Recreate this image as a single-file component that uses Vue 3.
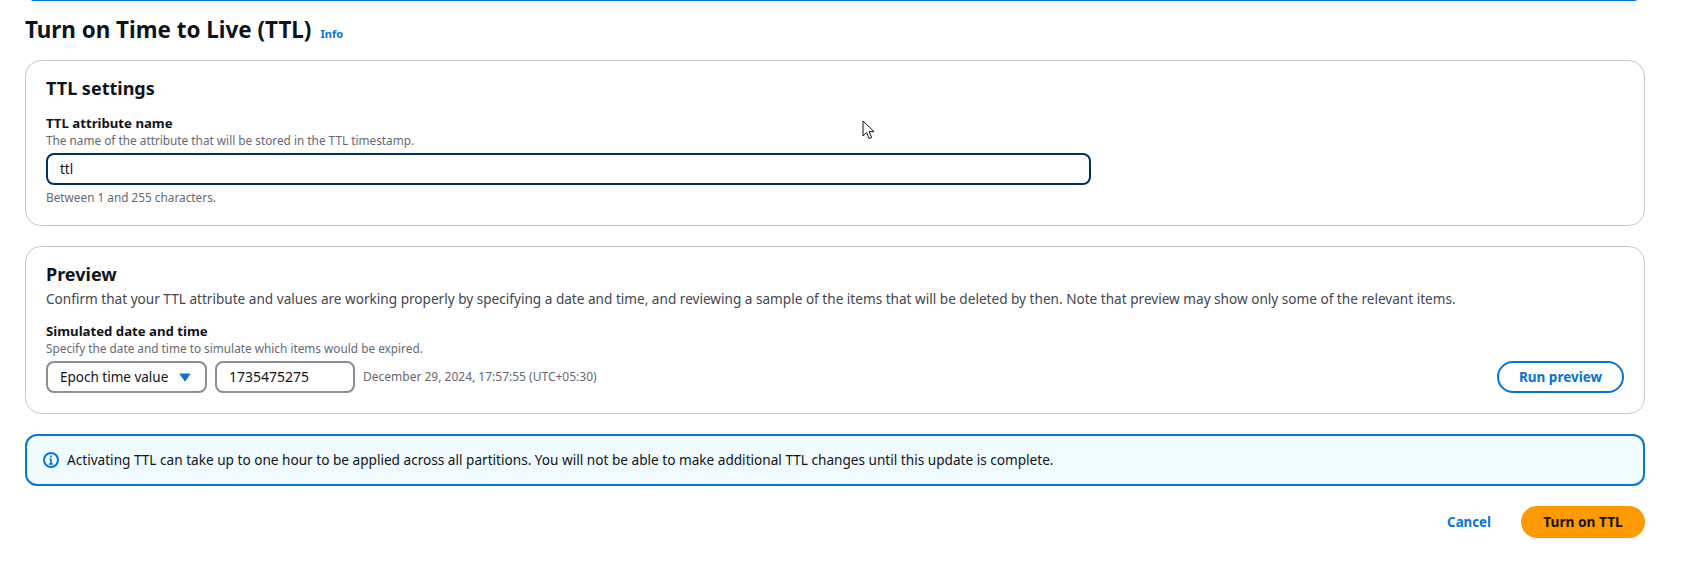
<template>
  <div class="page">
    <div class="top-edge"></div>
    <div class="title-row">
      <h1>Turn on Time to Live (TTL)</h1>
      <a class="info">Info</a>
    </div>

    <section class="card settings">
      <h2>TTL settings</h2>
      <div class="label">TTL attribute name</div>
      <div class="hint">The name of the attribute that will be stored in the TTL timestamp.</div>
      <input class="name-input" type="text" value="ttl" />
      <div class="hint below">Between 1 and 255 characters.</div>
    </section>

    <section class="card preview">
      <h2>Preview</h2>
      <p class="desc">{{ previewText }}</p>
      <div class="label sim">Simulated date and time</div>
      <div class="hint">Specify the date and time to simulate which items would be expired.</div>
      <div class="controls">
        <div class="select">
          <span>Epoch time value</span>
          <svg width="12" height="9" viewBox="0 0 12 9"><path d="M1 1h10L6 8z" fill="#0972d3" stroke="#0972d3" stroke-linejoin="round" /></svg>
        </div>
        <div class="epoch">1735475275</div>
        <span class="date">December 29, 2024, 17:57:55 (UTC+05:30)</span>
        <button class="btn outline">Run preview</button>
      </div>
    </section>

    <div class="alert">
      <svg width="16" height="16" viewBox="0 0 16 16" fill="none" stroke="#0972d3" stroke-width="2">
        <circle cx="8" cy="8" r="7" />
        <path d="M8 7v5M6 12h4M6.500 7H8" stroke-width="1.6" />
        <path d="M8 3.600v2" stroke-width="1.8" />
      </svg>
      <span>{{ alertText }}</span>
    </div>

    <div class="actions">
      <a class="cancel">Cancel</a>
      <button class="btn primary">Turn on TTL</button>
    </div>

    <svg class="cursor" width="13" height="20" viewBox="0 0 13 20">
      <path d="M1 1v15l3.600-3.400 2.600 6 2.500-1.100-2.600-5.800h5z" fill="#fff" stroke="#111" stroke-width="1" stroke-linejoin="round" />
    </svg>
  </div>
</template>

<script setup>
const previewText = 'Confirm that your TTL attribute and values are working properly by specifying a date and time, and reviewing a sample of the items that will be deleted by then. Note that preview may show only some of the relevant items.'
const alertText = 'Activating TTL can take up to one hour to be applied across all partitions. You will not be able to make additional TTL changes until this update is complete.'
</script>

<style>
html, body {
  margin: 0;
  background: #fff;
}
</style>

<style scoped>
.page {
  position: relative;
  height: 569px;
  box-sizing: border-box;
  padding: 0 42px 0 25px;
  font-family: "Noto Sans", "Open Sans", sans-serif;
  font-size: 14px;
  line-height: 20px;
  color: #0f141a;
  overflow: hidden;
}
.top-edge {
  height: 2px;
  margin: -1px 8px 0 6px;
  background: #0972d3;
  box-shadow: 0 3px 8px rgba(0, 7, 22, 0.2);
  border-radius: 0 0 4px 4px;
}
.title-row {
  display: flex;
  align-items: baseline;
  gap: 9px;
  height: 59px;
  padding-top: 13px;
  box-sizing: border-box;
}
h1 {
  margin: 0;
  font-size: 22.4px;
  line-height: 32px;
  font-weight: 700;
}
.info {
  font-size: 11px;
  font-weight: 700;
  color: #0972d3;
}
.card {
  border: 1px solid #c6c6cd;
  border-radius: 16px;
  padding: 15px 20px 0;
  box-sizing: border-box;
}
.settings {
  height: 166px;
}
.preview {
  position: relative;
  height: 168px;
  margin-top: 20px;
  padding-top: 15px;
}
h2 {
  margin: 0;
  font-size: 18px;
  line-height: 24px;
  font-weight: 700;
}
.label {
  margin-top: 14px;
  font-weight: 700;
  font-size: 13.2px;
  line-height: 18px;
}
.hint {
  font-size: 11.8px;
  line-height: 16px;
  color: #656871;
}
.name-input {
  display: block;
  width: 1045px;
  height: 32px;
  margin-top: 5px;
  padding: 0 12px;
  box-sizing: border-box;
  border: 2px solid #00305f;
  border-radius: 8px;
  outline: none;
  font: inherit;
  font-size: 13.5px;
  color: #0f141a;
}
.below {
  margin-top: 4px;
}
.desc {
  margin: 3px 0 0;
  font-size: 13.6px;
  color: #424650;
}
.sim {
  margin-top: 13px;
}
.controls {
  display: flex;
  align-items: center;
  margin-top: 5px;
}
.select {
  display: flex;
  align-items: center;
  justify-content: space-between;
  width: 161px;
  height: 32px;
  padding: 0 14px 0 12px;
  box-sizing: border-box;
  border: 2px solid #8c8c94;
  border-radius: 8px;
  font-size: 13.5px;
}
.epoch {
  width: 140px;
  height: 32px;
  margin-left: 8px;
  padding: 0 12px;
  box-sizing: border-box;
  border: 2px solid #8c8c94;
  border-radius: 8px;
  line-height: 28px;
  font-size: 14px;
}
.date {
  margin-left: 8px;
  font-size: 12px;
  color: #656871;
}
.btn {
  height: 32px;
  border-radius: 16px;
  font: inherit;
  font-size: 13.5px;
  font-weight: 700;
  cursor: pointer;
}
.outline {
  width: 127px;
  margin-left: auto;
  border: 2px solid #0972d3;
  background: #fff;
  color: #0972d3;
}
.alert {
  display: flex;
  align-items: center;
  gap: 8px;
  height: 52px;
  margin-top: 20px;
  padding-left: 16px;
  box-sizing: border-box;
  border: 2px solid #0972d3;
  border-radius: 12px;
  background: #f0fbff;
  font-size: 13.62px;
}
.actions {
  display: flex;
  align-items: center;
  justify-content: flex-end;
  gap: 30px;
  margin-top: 20px;
}
.cancel {
  font-size: 13.3px;
  font-weight: 700;
  color: #0972d3;
}
.primary {
  width: 124px;
  border: none;
  background: #ff9900;
  color: #0f141a;
  font-size: 13.7px;
}
.cursor {
  position: absolute;
  left: 862px;
  top: 120px;
}
</style>
